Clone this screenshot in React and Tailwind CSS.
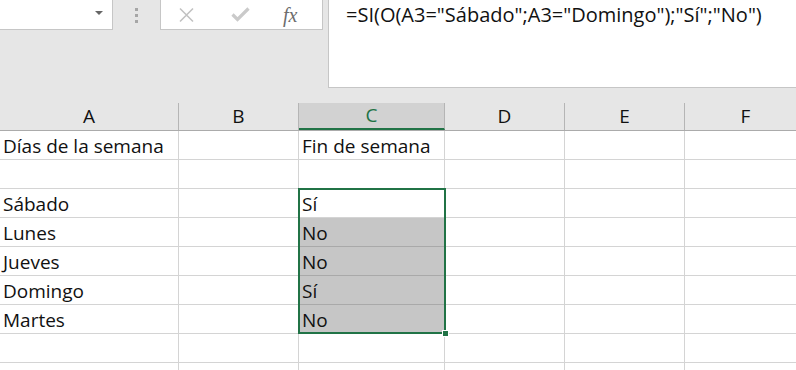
import React from "react";

const cols = [
  { key: "A", w: "w-[179px]" },
  { key: "B", w: "w-[120px]" },
  { key: "C", w: "w-[146px]" },
  { key: "D", w: "w-[120px]" },
  { key: "E", w: "w-[120px]" },
  { key: "F", w: "w-[122px]" },
];

const rows = [
  ["Días de la semana", "", "Fin de semana"],
  ["", "", ""],
  ["Sábado", "", "Sí"],
  ["Lunes", "", "No"],
  ["Jueves", "", "No"],
  ["Domingo", "", "Sí"],
  ["Martes", "", "No"],
  ["", "", ""],
  ["", "", ""],
];

const font = { fontFamily: '"Open Sans", "Noto Sans", sans-serif' };

const App = () => {
  return (
    <div className="w-[796px] h-[370px] overflow-hidden bg-white text-[#111]" style={font}>
      {/* Formula bar */}
      <div className="flex h-[103px] bg-[#e6e6e6]">
        <div className="w-[113px] h-[30px] bg-white border-r border-b border-[#c6c6c6] relative">
          <span className="absolute left-[95px] top-[11px] w-0 h-0 border-l-[4px] border-r-[4px] border-t-[4px] border-l-transparent border-r-transparent border-t-[#666]" />
        </div>
        <div className="w-[47px] h-[30px] flex flex-col items-center justify-center gap-[3px]">
          <span className="w-[3px] h-[3px] bg-[#a6a6a6]" />
          <span className="w-[3px] h-[3px] bg-[#a6a6a6]" />
          <span className="w-[3px] h-[3px] bg-[#a6a6a6]" />
        </div>
        <div className="w-[163px] h-[30px] bg-white border-l border-r border-b border-[#c6c6c6] flex items-center">
          <svg width="17" height="16" viewBox="0 0 17 16" className="ml-[17px]">
            <path d="M2 1.5 L15 14.5 M15 1.5 L2 14.5" stroke="#c2c2c2" strokeWidth="1.6" fill="none" />
          </svg>
          <svg width="19" height="15" viewBox="0 0 19 15" className="ml-[36px]">
            <path d="M1.5 7.5 L6.5 12.5 L17.5 1.5" stroke="#cacaca" strokeWidth="3.2" fill="none" />
          </svg>
          <span className="ml-[33px] text-[20px] italic text-[#6d6d6d] leading-none" style={{ fontFamily: '"Liberation Serif", serif' }}>fx</span>
        </div>
        <div className="w-[5px]" />
        <div className="flex-1 h-[88px] bg-white border-l border-b border-[#c6c6c6] pl-[17px] pt-[3px]">
          <span className="text-[20px] leading-[24px] whitespace-nowrap">=SI(O(A3="Sábado";A3="Domingo");"Sí";"No")</span>
        </div>
      </div>

      {/* Column headers */}
      <div className="flex h-[28px] bg-[#e6e6e6] border-b border-[#ababab]">
        {cols.map((c) => (
          <div
            key={c.key}
            className={`${c.w} shrink-0 flex items-center justify-center text-[19px] border-r border-[#b5b5b5] ${
              c.key === "C" ? "bg-[#d2d2d2] text-[#217346] border-b-2 border-b-[#217346]" : ""
            }`}
          >
            {c.key}
          </div>
        ))}
      </div>

      {/* Cells */}
      <div className="relative">
        {rows.map((r, i) => (
          <div key={i} className="flex h-[29px]">
            {cols.map((c, j) => {
              const shaded = j === 2 && i >= 3 && i <= 6;
              return (
                <div
                  key={c.key}
                  className={`${c.w} shrink-0 border-r border-b ${
                    shaded ? "bg-[#c6c6c6] border-b-[#a9a9a9] border-r-[#d4d4d4]" : "border-[#d4d4d4]"
                  } flex items-end pl-[3px] pb-[1px] text-[19px] leading-[24px] whitespace-nowrap`}
                >
                  {r[j] || ""}
                </div>
              );
            })}
          </div>
        ))}
        {/* Selection outline C3:C7 */}
        <div className="absolute left-[298px] top-[57px] w-[148px] h-[146px] border-2 border-[#217346] pointer-events-none" />
        <div className="absolute left-[442px] top-[199px] w-[7px] h-[7px] bg-[#217346] border border-white" />
      </div>
    </div>
  );
};

export default App;
